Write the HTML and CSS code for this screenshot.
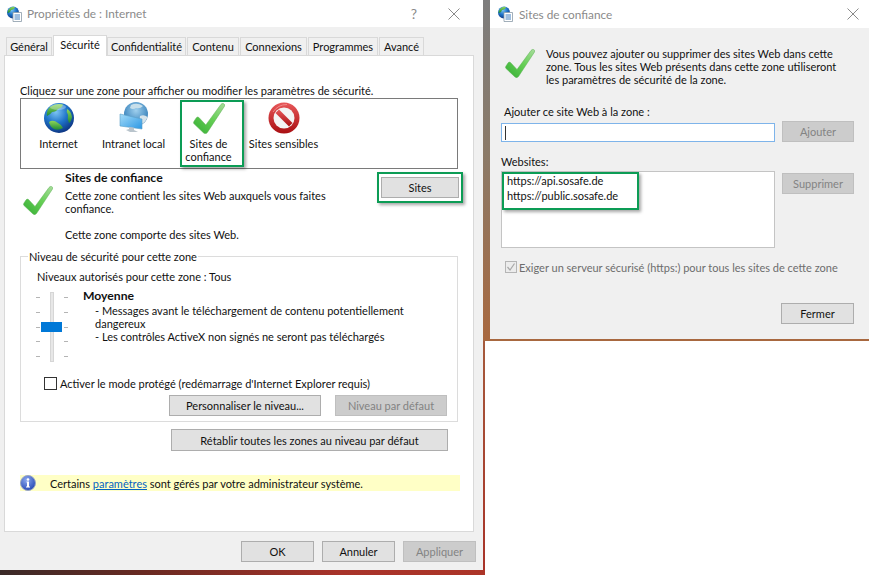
FILE: index.html
```html
<!DOCTYPE html>
<html lang="fr">
<head>
<meta charset="utf-8">
<title>Propriétés de : Internet</title>
<link rel="stylesheet" href="styles.css">
</head>
<body>
<svg class="defs" aria-hidden="true">
  <defs>
    <radialGradient id="gOcean" cx="40%" cy="30%" r="75%">
      <stop offset="0" stop-color="#7cc4f2"/><stop offset=".5" stop-color="#1f74c9"/><stop offset="1" stop-color="#0b2f7c"/>
    </radialGradient>
    <radialGradient id="gPale" cx="50%" cy="35%" r="75%">
      <stop offset="0" stop-color="#9fd0ee"/><stop offset=".6" stop-color="#4f93c6"/><stop offset="1" stop-color="#2a6aa0"/>
    </radialGradient>
    <linearGradient id="gLand" x1="0" y1="0" x2="0" y2="1">
      <stop offset="0" stop-color="#8fd65a"/><stop offset="1" stop-color="#1f8a35"/>
    </linearGradient>
    <linearGradient id="gCheck" x1="1" y1="0" x2="0" y2="1">
      <stop offset="0" stop-color="#a8dc9c"/><stop offset=".45" stop-color="#66cf55"/><stop offset="1" stop-color="#34ad34"/>
    </linearGradient>
    <linearGradient id="gRed" x1="0" y1="0" x2="0" y2="1">
      <stop offset="0" stop-color="#e8585a"/><stop offset="1" stop-color="#a90f12"/>
    </linearGradient>
    <linearGradient id="gScreen" x1="0" y1="0" x2="1" y2="1">
      <stop offset="0" stop-color="#a6dcf8"/><stop offset="1" stop-color="#2b97e4"/>
    </linearGradient>
    <radialGradient id="gInfo" cx="40%" cy="30%" r="80%">
      <stop offset="0" stop-color="#8aa8ee"/><stop offset="1" stop-color="#1c3fae"/>
    </radialGradient>
    <symbol id="check" viewBox="0 0 30 30">
      <path fill="url(#gCheck)" stroke="#5bb052" stroke-width=".5" d="M1 18Q0 19.500 1 20.500L10 29Q12 30.500 13.500 28.500L29.500 4Q30.200 2 28.500 1.500Q27 1 26 2.500L12 21.500 5.500 14.500Q4 13.500 3 15Z"/>
    </symbol>
    <symbol id="globe" viewBox="0 0 32 32">
      <circle cx="16" cy="16" r="15" fill="url(#gOcean)"/>
      <path fill="url(#gLand)" d="M7 5Q13 1 20 2.500 19 6 15 7 13 10 9 10 8 12 4 14 3 9 7 5Z"/>
      <path fill="url(#gLand)" d="M6 20Q10 17 15 21 19 23 20 26 15 29 11 27 7 25 6 20Z"/>
      <path fill="url(#gLand)" d="M24 7Q28 9 29 15 28 20 26 21 24 17 25 13 23 10 24 7Z"/>
      <ellipse cx="15" cy="5" rx="8" ry="3" fill="#fff" opacity=".3"/>
    </symbol>
    <symbol id="intranet" viewBox="0 0 30 32">
      <circle cx="17" cy="12" r="12" fill="url(#gPale)"/>
      <path fill="#c8dfea" d="M12 3Q18 0 24 4 21 7 17 6 14 8 11 6Z"/>
      <path fill="#d5e3ea" d="M21 14Q25 12 28.500 15 27 20 23 22 20 19 21 14Z"/>
      <path fill="url(#gScreen)" stroke="#5b9fc8" stroke-width=".6" d="M1 12 23 17V27L1 24Z"/>
      <path fill="#b9c4cc" d="M10 25 15 25.700V28L19 30 11 30 7 28 10 27Z"/>
    </symbol>
    <symbol id="stop" viewBox="0 0 32 32">
      <circle cx="16" cy="16" r="15.500" fill="url(#gRed)"/>
      <circle cx="16" cy="16" r="10.500" fill="#f4f4f4"/>
      <path fill="url(#gRed)" d="M7.500 11 11 7.500 24.500 21 21 24.500Z"/>
      <path fill="none" stroke="#f7a0a0" stroke-width="1" opacity=".7" d="M5 10Q10 2.500 19 2.500"/>
    </symbol>
    <symbol id="appicon" viewBox="0 0 16 16">
      <circle cx="7" cy="6.500" r="6" fill="url(#gOcean)"/>
      <path fill="url(#gLand)" d="M3 3Q6 0 9 1 8 4 5 4 4 7 1.500 7 1.500 5 3 3Z"/>
      <path fill="#fff" stroke="#8a9aa8" stroke-width=".8" d="M7 6.500H15.500V15.500H7Z"/>
      <path fill="none" stroke="#3f7fc0" d="M8.500 9H14M8.500 11H14M8.500 13H14"/>
    </symbol>
  </defs>
</svg>

<main class="desktop">
  <div class="wall"></div>
  <div class="edge"></div>
  <div class="strip"></div>

  <section class="window window-main">
    <header class="titlebar">
      <svg class="app-icon"><use href="#appicon"/></svg>
      <span class="title">Propriétés de : Internet</span>
      <span class="help">?</span>
      <svg class="close" viewBox="0 0 12 12"><path d="M.5.500 11.500 11.500M11.500.500.500 11.500"/></svg>
    </header>

    <nav class="tabs">
      <span class="tab tab-general">Général</span>
      <span class="tab tab-active">Sécurité</span>
      <span class="tab tab-conf">Confidentialité</span>
      <span class="tab tab-cont">Contenu</span>
      <span class="tab tab-conn">Connexions</span>
      <span class="tab tab-prog">Programmes</span>
      <span class="tab tab-avance">Avancé</span>
    </nav>

    <div class="panel">
      <p class="prompt">Cliquez sur une zone pour afficher ou modifier les paramètres de sécurité.</p>

      <div class="zones">
        <div class="zone">
          <svg class="zone-icon"><use href="#globe"/></svg>
          <span>Internet</span>
        </div>
        <div class="zone">
          <svg class="zone-icon"><use href="#intranet"/></svg>
          <span>Intranet local</span>
        </div>
        <div class="zone zone-selected">
          <svg class="zone-icon"><use href="#check"/></svg>
          <span>Sites de<br>confiance</span>
          <div class="mark mark-zone"></div>
        </div>
        <div class="zone">
          <svg class="zone-icon"><use href="#stop"/></svg>
          <span>Sites sensibles</span>
        </div>
      </div>

      <div class="details">
        <svg class="details-icon"><use href="#check"/></svg>
        <div class="details-text">
          <h2 class="strong">Sites de confiance</h2>
          <p class="details-copy">Cette zone contient les sites Web auxquels vous faites<br>confiance.</p>
          <p class="details-copy details-copy-last">Cette zone comporte des sites Web.</p>
        </div>
        <div class="sites-wrap">
          <button class="btn btn-sites">Sites</button>
          <div class="mark mark-sites"></div>
        </div>
      </div>

      <div class="group">
        <span class="group-title">Niveau de sécurité pour cette zone</span>
        <p class="allowed">Niveaux autorisés pour cette zone : Tous</p>
        <div class="level">
          <div class="slider">
            <div class="ticks"><i></i><i></i><i></i><i></i><i></i></div>
            <div class="track"></div>
            <div class="ticks"><i></i><i></i><i></i><i></i><i></i></div>
            <div class="thumb"></div>
          </div>
          <div class="level-text">
            <h3 class="strong">Moyenne</h3>
            <p class="level-copy">- Messages avant le téléchargement de contenu potentiellement<br>dangereux<br>- Les contrôles ActiveX non signés ne seront pas téléchargés</p>
          </div>
        </div>
        <label class="protected"><span class="box"></span><span>Activer le mode protégé (redémarrage d'Internet Explorer requis)</span></label>
        <div class="group-buttons">
          <button class="btn btn-custom">Personnaliser le niveau...</button>
          <button class="btn btn-default" disabled>Niveau par défaut</button>
        </div>
      </div>

      <button class="btn btn-reset">Rétablir toutes les zones au niveau par défaut</button>

      <div class="info">
        <svg class="info-icon" viewBox="0 0 16 16">
          <circle cx="8" cy="8" r="7.500" fill="url(#gInfo)" stroke="#9aa6c4"/>
          <circle cx="8" cy="4.500" r="1.300" fill="#fff"/>
          <path fill="#fff" d="M6.500 6.500H9V11.500H10V12.500H6V11.500H7V7.500H6.500Z"/>
        </svg>
        <span>Certains <a class="link">paramètres</a> sont gérés par votre administrateur système.</span>
      </div>
    </div>

    <footer class="footer">
      <button class="btn btn-foot">OK</button>
      <button class="btn btn-foot">Annuler</button>
      <button class="btn btn-foot" disabled>Appliquer</button>
    </footer>
  </section>

  <section class="window window-sites">
    <header class="titlebar titlebar-sites">
      <svg class="app-icon"><use href="#appicon"/></svg>
      <span class="title">Sites de confiance</span>
      <svg class="close" viewBox="0 0 12 12"><path d="M.5.500 11.500 11.500M11.500.500.500 11.500"/></svg>
    </header>
    <div class="sites-body">
      <div class="intro">
        <svg class="details-icon"><use href="#check"/></svg>
        <p>Vous pouvez ajouter ou supprimer des sites Web dans cette<br>zone. Tous les sites Web présents dans cette zone utiliseront<br>les paramètres de sécurité de la zone.</p>
      </div>
      <p class="add-label">Ajouter ce site Web à la zone :</p>
      <div class="add-row">
        <div class="input"><i class="caret"></i></div>
        <button class="btn btn-side" disabled>Ajouter</button>
      </div>
      <p class="list-label">Websites:</p>
      <div class="list-row">
        <div class="list">
          <span>https://api.sosafe.de</span>
          <span>https://public.sosafe.de</span>
          <div class="mark mark-list"></div>
        </div>
        <button class="btn btn-side btn-remove" disabled>Supprimer</button>
      </div>
      <label class="https">
        <svg class="box-check" viewBox="0 0 12 12"><rect x=".5" y=".5" width="11" height="11"/><path d="M2.500 6 5 9 9.500 2.500"/></svg>
        <span>Exiger un serveur sécurisé (https:) pour tous les sites de cette zone</span>
      </label>
      <div class="close-row"><button class="btn btn-close">Fermer</button></div>
    </div>
  </section>
</main>
</body>
</html>
```

FILE: styles.css
```css
* { box-sizing: border-box; }
html, body { margin: 0; padding: 0; background: #fff; }
p, h2, h3 { margin: 0; font-size: inherit; font-weight: inherit; }
.defs { display: block; width: 0; height: 0; }

.desktop {
  position: relative;
  width: 870px;
  height: 575px;
  overflow: hidden;
  background: #fff;
  color: #111;
  font: 11px/13px Lato, Roboto, sans-serif;
}
.wall {
  position: absolute; left: 483px; top: 0; width: 386px; height: 341px;
  background: linear-gradient(#7d7d7d, #8b7a68 45%, #a8683f);
}
.edge {
  position: absolute; left: 483px; top: 341px; width: 2px; height: 234px;
  background: linear-gradient(#a55a3c, #a83228);
}
.strip {
  position: absolute; left: 0; top: 570px; width: 485px; height: 5px;
  background: linear-gradient(90deg, #3a2a28, #6a2a22 30%, #a8332a 70%, #ac3528);
}

.window { position: absolute; top: 0; background: #f0f0f0; }
.window-main { left: 0; width: 483px; height: 570px; }
.window-sites { left: 490px; width: 379px; height: 339px; }

.titlebar {
  display: flex; align-items: center;
  height: 27px; padding: 0 23px 0 6px;
  background: #fff; color: #8a8a8a;
}
.titlebar-sites { height: 28px; padding: 0 10px 0 7px; }
.app-icon { width: 16px; height: 16px; flex: none; }
.title { margin-left: 5px; font-size: 11.800px; flex: 1; }
.titlebar-sites .title { margin-left: 6px; }
.help { margin-right: 31px; font-size: 14px; color: #8a8a8a; }
.close { width: 12px; height: 12px; fill: none; stroke: #8a8a8a; stroke-width: 1; }

.tabs { display: flex; height: 28px; padding: 10px 0 0 6px; gap: 1px; align-items: flex-end; }
.tab {
  display: block; height: 18px; line-height: 18px; text-align: center; white-space: nowrap;
  background: #f0f0f0; border: 1px solid #d9d9d9; border-bottom: 0;
}
.tab-general { width: 46px; }
.tab-active {
  width: 54px; height: 21px; line-height: 17px; margin: 0 -1px -1px 0;
  background: #fff; position: relative; z-index: 1;
}
.tab-conf { width: 79px; }
.tab-cont { width: 52px; }
.tab-conn { width: 67px; }
.tab-prog { width: 70px; }
.tab-avance { width: 45px; }

.panel {
  margin-left: 4px; width: 470px; height: 477px;
  padding: 28px 0 0 15px;
  background: #fff; border: 1px solid #d9d9d9;
}
.prompt { height: 14px; white-space: nowrap; }

.zones {
  display: flex; width: 438px; height: 71px;
  border: 1px solid #7a7a7a;
}
.zone {
  position: relative;
  display: flex; flex-direction: column; align-items: center;
  width: 75px; padding-top: 3px; text-align: center; white-space: nowrap;
}
.zone-icon { width: 32px; height: 32px; margin-bottom: 3px; flex: none; }

.mark {
  position: absolute;
  border: 2px solid #0c9c55;
  box-shadow: 2px 2px 3px rgba(0, 0, 0, .35);
  pointer-events: none;
}
.mark-zone { left: 9px; top: 1px; width: 64px; height: 67px; }
.mark-sites { left: -4px; top: -5px; width: 86px; height: 31px; }
.mark-list { left: 0; top: 0; width: 137px; height: 38px; }

.details { display: flex; height: 87px; padding-top: 2px; }
.details-icon { width: 30px; height: 30px; flex: none; }
.details > .details-icon { margin: 14px 0 0 3px; }
.details-text { width: 316px; margin-left: 12px; }
.strong { font-size: 12.200px; font-weight: 700; }
.details-copy { margin-top: 5px; }
.details-copy-last { margin-top: 13px; }
.sites-wrap { position: relative; margin-top: 6px; height: 21px; }

.btn {
  display: block; padding: 0; margin: 0;
  font: inherit; color: #111; text-align: center;
  background: #e1e1e1; border: 1px solid #adadad; border-radius: 0;
}
.btn:disabled { background: #cccccc; border-color: #bfbfbf; color: #838383; }
.btn-sites { width: 78px; height: 21px; }

.group {
  position: relative;
  width: 438px; height: 166px; padding: 13px 0 0 16px;
  border: 1px solid #dcdcdc;
}
.group-title {
  position: absolute; left: 7px; top: -7px; padding: 0 1px; background: #fff;
}
.allowed { height: 13px; }

.level { display: flex; height: 79px; margin-top: 6px; }
.slider {
  position: relative;
  display: flex; justify-content: space-between;
  width: 32px; height: 70px; margin-top: 3px; margin-left: -1px;
}
.track { width: 4px; height: 70px; background: #e7e7e7; border: 1px solid #d6d6d6; }
.ticks {
  display: flex; flex-direction: column; justify-content: space-between;
  width: 4px; height: 60px; margin-top: 5px;
}
.ticks i { display: block; height: 1px; background: #b4b4b4; }
.thumb {
  position: absolute; left: 5px; top: 30px; width: 21px; height: 10px; background: #0078d7;
}
.level-text { margin-left: 15px; }
.level-copy { margin-top: 2px; padding-left: 12px; }

.protected { display: flex; align-items: center; height: 14px; margin-left: 7px; margin-top: 8px; white-space: nowrap; }
.box { display: block; width: 13px; height: 13px; margin-right: 3px; background: #fff; border: 1px solid #333; }

.group-buttons { display: flex; margin: 5px 0 0 132px; }
.btn-custom { width: 152px; height: 21px; }
.btn-default { width: 112px; height: 21px; margin-left: 14px; }

.btn-reset { width: 277px; height: 22px; margin: 7px 0 0 151px; }

.info {
  display: flex; align-items: center;
  width: 440px; height: 16px; margin-top: 24px;
  background: #ffffc6;
}
.info-icon { width: 16px; height: 16px; margin-right: 14px; flex: none; }
.link { color: #0563c1; text-decoration: underline; }

.footer { display: flex; justify-content: flex-end; gap: 8px; padding: 9px 7px 0 0; }
.btn-foot { width: 73px; height: 21px; }

.sites-body { padding: 0 15px 0 11px; }
.intro { display: flex; padding: 19px 0 0 4px; }
.intro .details-icon { margin-top: 1px; }
.intro p { margin: 0 0 0 11px; white-space: nowrap; }
.add-label { margin: 19px 0 0 3px; }
.add-row { display: flex; justify-content: space-between; height: 21px; margin-top: 3px; }
.input {
  display: flex; align-items: center;
  width: 274px; height: 19px; margin-top: 2px; padding-left: 3px;
  background: #fff; border: 1px solid #7eb4ea;
}
.caret { display: block; width: 1px; height: 14px; background: #333; }
.btn-side { width: 72px; height: 21px; }
.list-label { margin-top: 13px; height: 13px; }
.list-row { display: flex; justify-content: space-between; margin-top: 3px; }
.list {
  position: relative;
  display: flex; flex-direction: column; gap: 2px;
  width: 274px; height: 77px; padding: 2px 0 0 5px;
  background: #fff; border: 1px solid #c4c4c4;
}
.btn-remove { margin-top: 2px; }
.https { display: flex; align-items: center; height: 14px; margin: 12px 0 0 4px; color: #6d6d6d; white-space: nowrap; }
.box-check { width: 12px; height: 12px; margin-right: 2px; fill: #ececec; stroke: #b5b5b5; flex: none; }
.box-check path { fill: none; stroke: #a8a8a8; stroke-width: 1.200; }
.close-row { display: flex; justify-content: flex-end; margin-top: 29px; }
.btn-close { width: 73px; height: 21px; }
```
